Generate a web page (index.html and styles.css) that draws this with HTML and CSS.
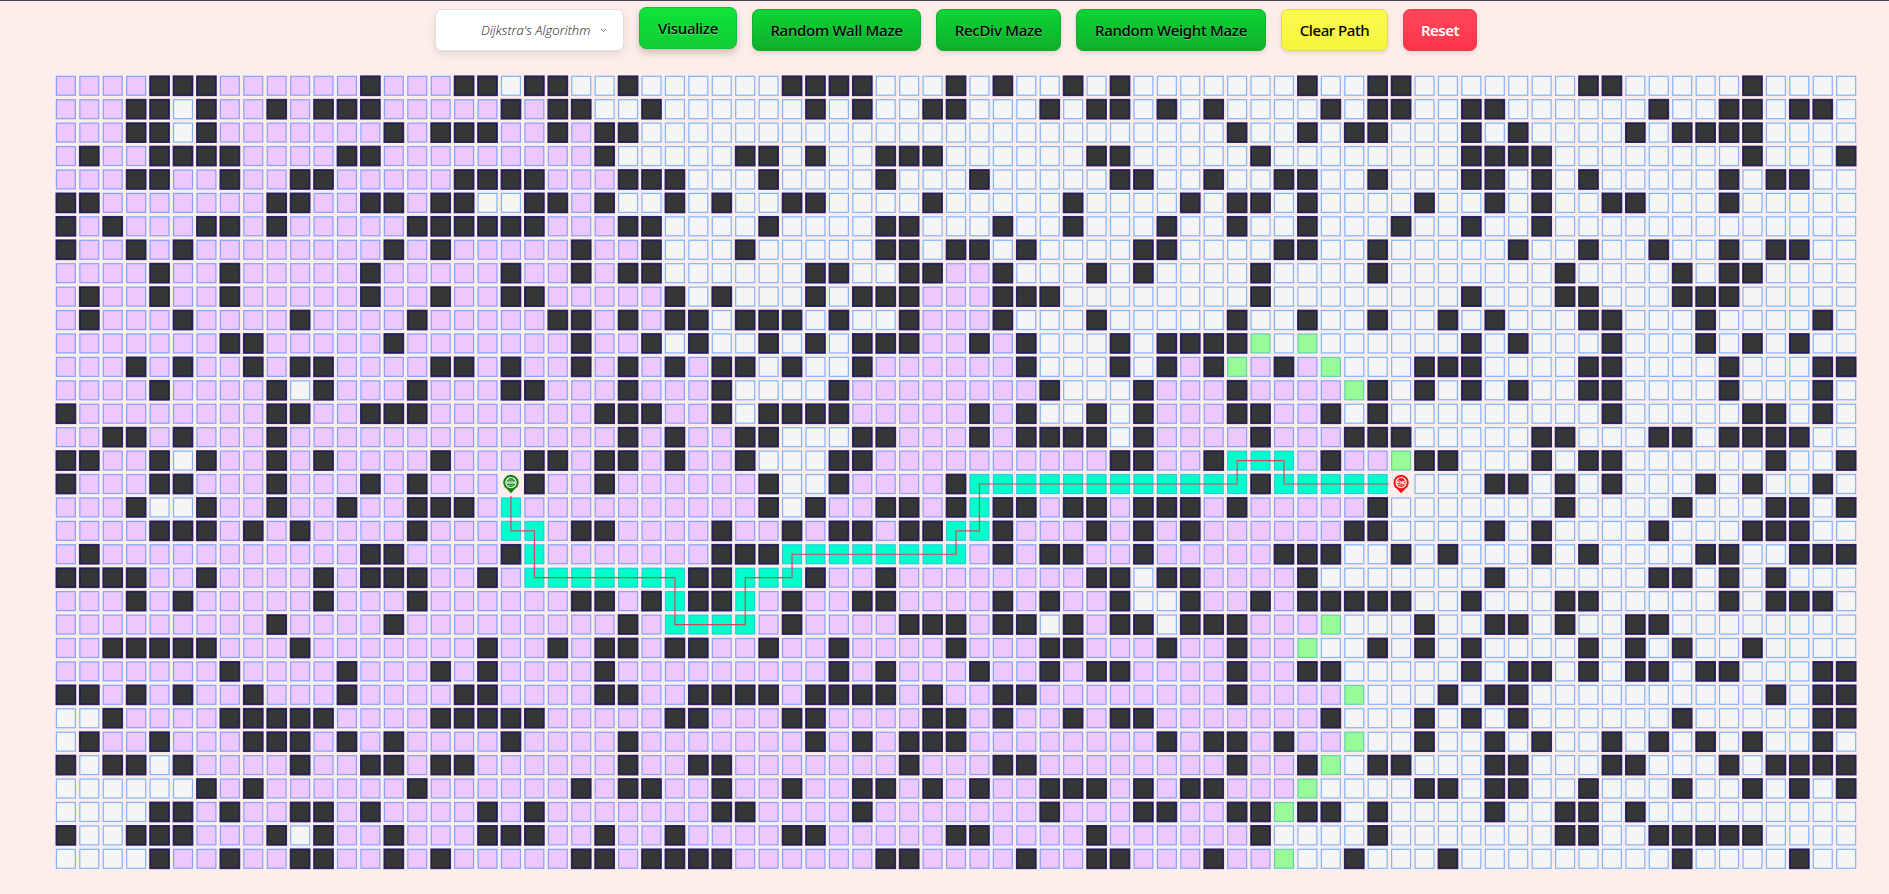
FILE: index.html
```html
<!DOCTYPE html>
<html lang="en">
<head>
<meta charset="utf-8">
<title>Pathfinding Visualizer</title>
<link rel="stylesheet" href="styles.css">
</head>
<body>
<header class="toolbar">
  <div class="select"><span class="select-label">Dijkstra's Algorithm</span>
    <svg class="chevron" width="7" height="5" viewBox="0 0 7 5"><path d="M1 1l2.5 2.4L6 1" fill="none" stroke="#777" stroke-width="1"/></svg>
  </div>
  <button class="btn btn-green btn-hover"><span>Visualize</span></button>
  <button class="btn btn-green w-wall"><span>Random Wall Maze</span></button>
  <button class="btn btn-green w-rec"><span>RecDiv Maze</span></button>
  <button class="btn btn-green w-weight"><span>Random Weight Maze</span></button>
  <button class="btn btn-yellow"><span>Clear Path</span></button>
  <button class="btn btn-red"><span>Reset</span></button>
</header>
<main class="board-wrap">
  <svg class="board" id="board" width="1889" height="824" viewBox="0 0 1889 824"></svg>
</main>
<script src="board.js"></script>
</body>
</html>
```
FILE: styles.css
```css
* { box-sizing: border-box; }
html, body { margin: 0; height: 100%; overflow: hidden; }
body { background: #fdeeeb; font-family: "Noto Sans", "Open Sans", sans-serif; border-top: 1px solid #45434b; }
.toolbar { display: flex; align-items: flex-start; height: 69px; padding: 8px 0 0 435px; }
.select { display: flex; align-items: center; width: 189px; height: 42px; margin-right: 15px; padding-left: 45px; background: #fff; border: 1px solid #dededf; border-radius: 7px; box-shadow: 0 4px 8px rgba(60, 20, 20, .1); }
.select-label { width: 111px; font: italic 300 13px/18px "Open Sans", sans-serif; letter-spacing: .05px; color: #111; white-space: nowrap; }
.chevron { margin-left: 8px; }
.btn { height: 42px; padding: 0; margin: 0 15px 0 0; border: 1px solid; border-radius: 7px; font: 500 15px/20px "Noto Sans", sans-serif; letter-spacing: -.27px; color: #000; white-space: nowrap; box-shadow: 0 2px 4px rgba(60, 20, 20, .13); }
.btn-green { background: linear-gradient(#0fd433, #0cb02a); border-color: #18a933; text-shadow: 0 1px 1px rgba(255, 255, 255, .35); }
.btn-hover { width: 98px; margin-top: -2px; background: linear-gradient(#11e339, #0fce32); border-color: #18bd38; box-shadow: 0 4px 7px rgba(60, 20, 20, .22); }
.w-wall { width: 169px; }
.w-rec { width: 125px; }
.w-weight { width: 190px; }
.btn-yellow { width: 107px; letter-spacing: -.45px; background: linear-gradient(#fbfa51, #f7f53b); border-color: #dfdd49; }
.btn-red { width: 74px; margin-right: 0; letter-spacing: -.5px; background: linear-gradient(#ff485b, #fd3349); border-color: #eb3e50; color: #fff; font-weight: 600; }
.board-wrap { display: block; }
.board { display: block; }
.cell { stroke-width: 1.17; }
.empty { fill: #f5f5f5; stroke: rgba(85, 155, 255, .74); }
.visited { fill: #ecc8ff; stroke: rgba(90, 140, 255, .74); }
.wall { fill: #343736; stroke: rgba(28, 24, 90, .92); stroke-width: 1.8; }
.front { fill: #98fb98; stroke: rgba(80, 200, 185, .85); }
.path { fill: #00ffca; stroke: rgba(20, 190, 225, .8); }
.route { fill: none; stroke: rgba(255, 30, 60, .8); stroke-width: 1.17; }
```
FILE: board.js
```js
const rows = [
"vvvv###vvvvvv#vvv##.|##..#......####...#.|#..#.#.......#..##..|.....##.....#....",
"vvv##.#vv#v###vvvvv#|v##..#......#.#..##.|..#.##.#.#....#.##..|##......#..##.##.",
"vvv##.#vvvvvvv#v###v|v#v##...............|..........#..#.##...|#.#....#.####....",
"v#vv####vvvv##vvvvvv|vvv#.....##.#..###..|....##.....#........|####........#...#",
"vvv##vv#vv##vvvvv###|#vvv###...#....#...#|.....##..#..##..#...|##.#.#.....#.##..",
"##vvvvvvv##vv##v##..|##v#..#.#..##....#..|...#....#.##.#....#.|.#.#..##...#.....",
"#v#vvv##v#vvvvv#####|#vvv##....#....##...|#..#...#..#..#...#..|#..#.............",
"#vv#v#vvvvvvvv#v#vvv|vv#vv#...#.....##.##|.#....##....##..#...|..#..#..#..#.##..",
"vvvv#vv#vvvvv#vvvvv#|vv#v##......##..##vv|#...#.#....#....#...|....#....#.##....",
"v#vv#vv#vvvvv#vv#vv#|#vvvvv#.#...#.###vvv|###........#........|#...##...###.....",
"v#vvv#vvvv#vvvv#vvvv|v##v#v##.###.#..#vvv|#...#.....#..#..#..#|.#...##...#....#.",
"vvvvvvv##vvvvv#vvvvv|vv#vv#.#..#.#.###vv#|v#...#.####g.g......|#.#...#...#.#.#..",
"vvv#v#vv#v##vvvv##v#|vv#v#v#v##.#..#vvvvv|v#...#.#v#gv#vg...##|#....##....#...##",
"vvvv#vvvv#.#vvv#vvv#|#vvv#vvv#....#vvvvvv|vv#...#vvv#vvvvg#.#.|#.#..##....#...#.",
"#vvvvvvvv##vv###vvvv|vvv###vv#.####vvvvv#|v#..#.#vvv##vv#.#...|......#.....##.#.",
"vv##v#vvv#vvvvvvvvvv|vvvv#v#vv##...##vvv#|v####.#vvvv#vvv###..|...##...##.####..",
"##vv#.#vv#v#vvvv#vvv|##v##v#vv#...##vvvvv|vvvvv##vv#pppv#vvg##|...#.##......#..#",
"#vvv##vvv#vvv#v#vvvS|#vv#vvvvvv#..#vvvv#p|ppppppppppp#pppppE..|.##.#.#...#.#..#.",
"vvv#..#vv#vv#vv###vp|vvvvvvvvvv#.#vv##v#p|##v##v###v#vvvvv#...|....#....#...##.#",
"vvvv###v#v#vvvv#vvvp|pv##vvvv#vv#v##v##pp|#vvv#v#v#vvvvvv##...|.#.#....#...###..",
"v#vvvvvvvvvvv##vvvv#|pvvvvvvv###ppppppppv|#v##vv#vvvvv###..#.#|...#.#....##..###",
"####vv#vvvv#v###vv#v|ppppppp##ppp#vv#vvvv|vvvv##.##vvvv#......|.#......##.#.#...",
"vvv#v#vvvvv#vvv#vvvv|vv##v#p##pv#vv##vvvv|#v#vv#..#vv#v#####..|#...##.....#.###.",
"vvvvvvvvv#vvvv#vvvvv|vvvv#vppppv#vvvv###v|##.#v##.###vvvg...#.|.##.#..##........",
"vv#####vvv#vvvvvvv#v|v#v##v##vv#vv#vvvv#v|vv##vvv#vv#vvg..#.#.|#....#.#.#..#....",
"vvvvvvv#vvvv#vvv#v#v|vvv#vvvvvvvvv#v#vvv#|vv#v##vvvv#vv##.....|#.##.#.##.##...##",
"##v#v#vv#vvv#vvvv##v|vvv##vv####v####v#vv|##vvvvvvvv#vvvvg...#|.##..........#.##",
"..#vvvv#####vvvv####|#vvvvv##vvv##vvvv##v|#vv#v##vvvvvvv#...#.|#.#......#.....##",
".#vv#vvv###v#v#vvvv#|vvvv#vvvvvvv#v#v###v|vvvvvvv#v##v#vvg..#.|.#.#..#.#.#.#..#.",
"#.##.#vvvv#vv##v##vv|vvvv#vv##vvvvvvv#vvv|##vvvvvvvv#vv#g.##..|.##...##...#.####",
"......#v#vvvvvv#vvvv|vv#v##vv#vv#vv##v#v#|vv###v#v##vvvg....##|.##..#...#..#.#.#",
"....##v#vv##v#vvvv#v|#vvvvvvv##vvvv#vvvvv|vv#vvv##vv##g##.#...|.#..##.#.........",
"#..###vvv#.#vv#vvv##|#vv#vv#vvvv##vvvvv##|vvvv#vvvvvv#....#...|....##..#####....",
"....#vv#vv##vv#v#vvv|vv##v####vvvvvv##vvv|v#vv##vvv#vvg..#...#|.........#....#.."
].map(r => r.replace(/\|/g, ""));

const PITCH = 23.425, X0 = 56.4, Y0 = 6.3, SIZE = 18.95;
const kinds = { "#": "wall", v: "visited", ".": "empty", g: "front", p: "path" };
const cx = c => X0 + c * PITCH + SIZE / 2;
const cy = r => Y0 + r * PITCH + SIZE / 2;

const pin = (c, r, color, label) => `<g transform="translate(${cx(c)} ${cy(r)})">
  <path d="M0 9.3L-4 5.1A7.7 7.7 0 1 1 4 5.1Z" fill="${color}"/>
  <circle cx="0" cy="-1.4" r="5.1" fill="${color}" stroke="#fff" stroke-width="1.1"/>
  ${label}</g>`;

let out = "";
rows.forEach((row, r) => [...row].forEach((ch, c) => {
  if (kinds[ch]) out += `<rect class="cell ${kinds[ch]}" x="${(X0 + c * PITCH).toFixed(2)}" y="${(Y0 + r * PITCH).toFixed(2)}" width="${SIZE}" height="${SIZE}"/>`;
}));

const stops = [[19, 19], [20, 19], [20, 21], [26, 21], [26, 23], [29, 23], [29, 21], [31, 21], [31, 20], [38, 20],
  [38, 19], [39, 19], [39, 17], [50, 17], [50, 16], [52, 16], [52, 17]];
out += `<polyline class="route" points="${cx(19)},${cy(17) + 12} ${stops.map(([c, r]) => cx(c) + "," + cy(r)).join(" ")} ${cx(57) - 12},${cy(17)}"/>`;
out += pin(19, 17, "#128012", '<path d="M-4.6 -1.4H4.6" stroke="#d5ead5" stroke-width="2.4"/><path d="M-3 -1.4H3" stroke="#6cab6c" stroke-width=".8" stroke-dasharray="1.1 .6"/><path d="M-2.8 -4H2.8M-2.8 1.4H2.8" stroke="#8fc48f" stroke-width="1"/>');
out += pin(57, 17, "#f81212", '<path d="M-3.6 -3.2V.4M-3.6 -3H-1.2M-3.6 -1.4H-1.2M-3.6 .3H-1.2M-.4 .6V-3L1.3 .4V-3.2M2.4 -3H3.4L4 -1.4L3.4 .2H2.4Z" fill="none" stroke="#ffdcdc" stroke-width=".9"/><path d="M-2.5 1.9H2.5" stroke="#ffb0b0" stroke-width=".8"/>');
document.getElementById("board").innerHTML = out;
```
